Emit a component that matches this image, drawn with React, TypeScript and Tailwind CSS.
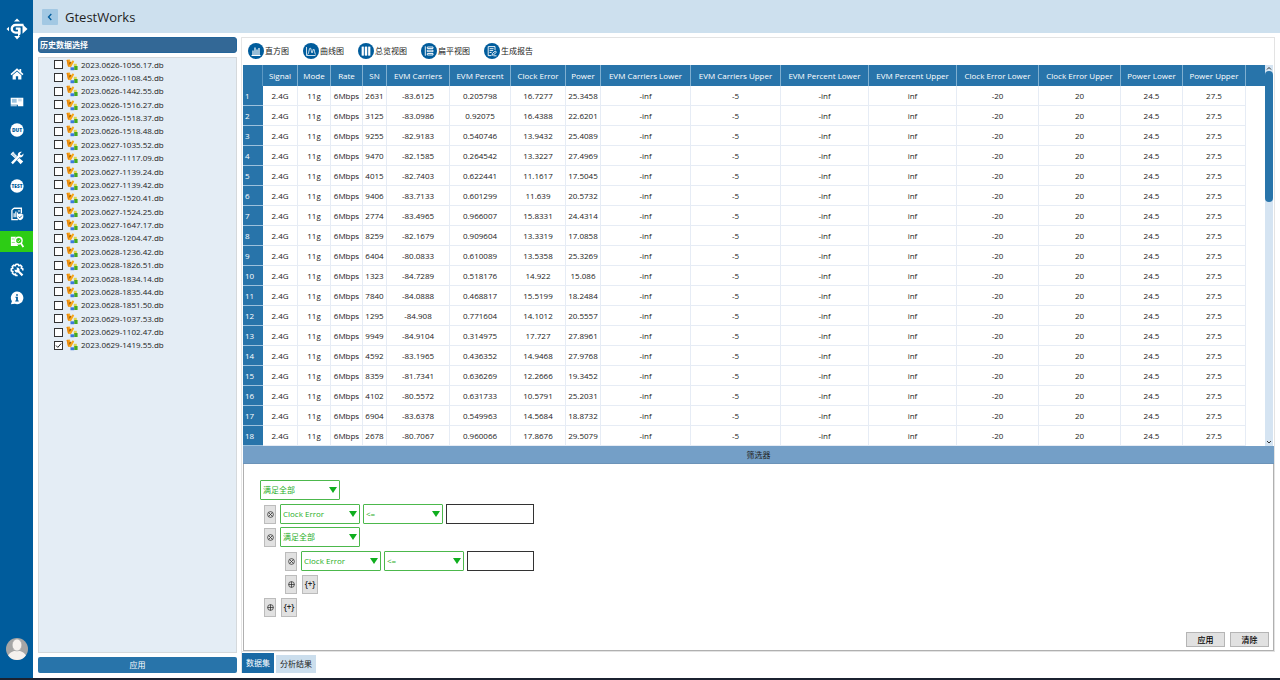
import React from "react";

const files = [
  "2023.0626-1056.17.db", "2023.0626-1108.45.db", "2023.0626-1442.55.db", "2023.0626-1516.27.db",
  "2023.0626-1518.37.db", "2023.0626-1518.48.db", "2023.0627-1035.52.db", "2023.0627-1117.09.db",
  "2023.0627-1139.24.db", "2023.0627-1139.42.db", "2023.0627-1520.41.db", "2023.0627-1524.25.db",
  "2023.0627-1647.17.db", "2023.0628-1204.47.db", "2023.0628-1236.42.db", "2023.0628-1826.51.db",
  "2023.0628-1834.14.db", "2023.0628-1835.44.db", "2023.0628-1851.50.db", "2023.0629-1037.53.db",
  "2023.0629-1102.47.db", "2023.0629-1419.55.db",
];

const columns = [
  { label: "Signal", width: "w-[35px]" },
  { label: "Mode", width: "w-[33px]" },
  { label: "Rate", width: "w-[32px]" },
  { label: "SN", width: "w-[24px]" },
  { label: "EVM Carriers", width: "w-[63px]" },
  { label: "EVM Percent", width: "w-[61px]" },
  { label: "Clock Error", width: "w-[55px]" },
  { label: "Power", width: "w-[35px]" },
  { label: "EVM Carriers Lower", width: "w-[90px]" },
  { label: "EVM Carriers Upper", width: "w-[90px]" },
  { label: "EVM Percent Lower", width: "w-[88px]" },
  { label: "EVM Percent Upper", width: "w-[88px]" },
  { label: "Clock Error Lower", width: "w-[82px]" },
  { label: "Clock Error Upper", width: "w-[82px]" },
  { label: "Power Lower", width: "w-[62px]" },
  { label: "Power Upper", width: "w-[63px]" },
];

const measurements = [
  ["2631", "-83.6125", "0.205798", "16.7277", "25.3458"],
  ["3125", "-83.0986", "0.92075", "16.4388", "22.6201"],
  ["9255", "-82.9183", "0.540746", "13.9432", "25.4089"],
  ["9470", "-82.1585", "0.264542", "13.3227", "27.4969"],
  ["4015", "-82.7403", "0.622441", "11.1617", "17.5045"],
  ["9406", "-83.7133", "0.601299", "11.639", "20.5732"],
  ["2774", "-83.4965", "0.966007", "15.8331", "24.4314"],
  ["8259", "-82.1679", "0.909604", "13.3319", "17.0858"],
  ["6404", "-80.0833", "0.610089", "13.5358", "25.3269"],
  ["1323", "-84.7289", "0.518176", "14.922", "15.086"],
  ["7840", "-84.0888", "0.468817", "15.5199", "18.2484"],
  ["1295", "-84.908", "0.771604", "14.1012", "20.5557"],
  ["9949", "-84.9104", "0.314975", "17.727", "27.8961"],
  ["4592", "-83.1965", "0.436352", "14.9468", "27.9768"],
  ["8359", "-81.7341", "0.636269", "12.2666", "19.3452"],
  ["4102", "-80.5572", "0.631733", "10.5791", "25.2031"],
  ["6904", "-83.6378", "0.549963", "14.5684", "18.8732"],
  ["2678", "-80.7067", "0.960066", "17.8676", "29.5079"],
];
const limits = ["-inf", "-5", "-inf", "inf", "-20", "20", "24.5", "27.5"];

function Logo() {
  return (
    <svg viewBox="0 0 22 22" className="h-[22px] w-[22px]" fill="#fff" aria-hidden="true">
      <path d="M11 0.5 14 3.4H8z" />
      <path d="M11 21.5 14.200 18H8.200z" />
      <path d="M0.5 11 3 8.800v4.400z" />
      <path d="M21.500 11 16.500 6.200v9.600z" />
      <path d="M17.500 7H9.600a3.800 3.800 0 0 0 0 7.600h3.600v-4H9.800" fill="none" stroke="#fff" strokeWidth="2.400" />
      <path d="M12 10h2.400v6.400L12 18.500z" />
    </svg>
  );
}

const navItems: { name: string; art: React.ReactNode }[] = [
  {
    name: "主页",
    art: (
      <g>
        <path d="M8 1.400 0.600 8l1.200 1.400L8 4l6.200 5.400L15.400 8l-2.600-2.300V2.200h-2v1.700z" />
        <path d="M8 5 3 9.400v5h3.700v-3.800h2.600v3.800H13v-5z" />
      </g>
    ),
  },
  {
    name: "设备",
    art: (
      <g>
        <path d="M.8 3h14.400v9.800H9V11H.8z" />
        <path d="M2.200 4.400h5.400v4.400H2.200z" fill="#9cc3df" />
        <path d="M9.400 4.800h4M9.400 6.600h4" stroke="#7fb0d2" strokeWidth=".7" />
        <path d="M.8 12.300h7" stroke="#fff" strokeWidth="1" />
      </g>
    ),
  },
  {
    name: "待测件",
    art: (
      <g>
        <circle cx="8" cy="8" r="7.600" />
        <text x="8" y="10" textAnchor="middle" fontSize="5.600" fontWeight="800" fill="#005c9c">DUT</text>
      </g>
    ),
  },
  {
    name: "工具",
    art: (
      <g>
        <path d="m3.200 15-2-2L9 5.200a3.700 3.700 0 0 1 4.600-4.300L11.400 3l.4 1.500 1.500.4 2-2.100a3.700 3.700 0 0 1-4.400 4.400z" />
        <path d="M3.600.6.6 3.600 5.700 8.200 8.200 5.600z" />
        <path d="m9 9.500 1.600-1.600 4.500 4.200-3 3.100-4.200-4.600z" />
        <path d="M2.600 3.200 5.800 6.400M4 1.900l3.100 3.200" stroke="#005c9c" strokeWidth=".6" />
      </g>
    ),
  },
  {
    name: "测试",
    art: (
      <g>
        <circle cx="8" cy="8" r="7.600" />
        <text x="8" y="10" textAnchor="middle" fontSize="5.400" fontWeight="800" fill="#005c9c">TEST</text>
      </g>
    ),
  },
  {
    name: "报告",
    art: (
      <g>
        <path d="M4.400 1.400H13v6M9 14.400H2.200V3.600l2.200-2.200" fill="none" stroke="#fff" strokeWidth="1.500" />
        <path d="M4 11.800V7h1.400v4.800zM6 11.800V5h1.400v6.800zM8 9V6.400h1.400V9zM9 4h2.600v1H9z" />
        <path d="M11.600 7.400 15.200 8.600v2.800c0 1.800-1.600 3-3.600 3.800C9.600 14.400 8 13.200 8 11.400V8.600z" />
        <path d="m9.800 11 1.400 1.400 2.400-2.600" fill="none" stroke="#005c9c" strokeWidth="1" />
      </g>
    ),
  },
  {
    name: "历史数据",
    art: (
      <g>
        <path d="M1 2h6.200a5 5 0 0 0-1.200 5.800A5 5 0 0 0 9 11v1.600H1z" />
        <path d="M2 4.500h3M2 8.500h3.600" stroke="#2dcc15" strokeWidth=".6" />
        <circle cx="10" cy="6.400" r="3.800" fill="none" stroke="#fff" strokeWidth="1.600" />
        <path d="m12.400 9.200 2.800 4.600" stroke="#fff" strokeWidth="2" />
        <path d="m8.500 6.500 1.200 1.200 1.900-2.400" fill="none" stroke="#fff" strokeWidth=".8" />
      </g>
    ),
  },
  {
    name: "设置",
    art: (
      <g>
        <path
          d="M8.800 14.300H6.700L6.300 12.500 4.800 13.400 2.700 11.500 3.400 9.800 1.500 9.200V6.600L3.300 6 2.500 4.200 4.400 2.400 6.100 3.200 6.800 1.400H9.300L10 3.200 11.800 2.400 13.600 4.200 12.800 6 14.600 6.600V8.600"
          fill="none"
          stroke="#fff"
          strokeWidth="1.800"
          strokeLinejoin="round"
        />
        <path d="M5.200 7.400 7 8l1-.9-.6-1.900a3 3 0 0 1 3.500 3.800l4.300 4.200-1.800 1.800-4.200-4.200a3 3 0 0 1-4-2.800z" />
      </g>
    ),
  },
  {
    name: "关于",
    art: (
      <g>
        <path d="M8 .5a7.300 7.300 0 1 1-2.400 14.200L1 15.200l1.200-3.400A7.300 7.300 0 0 1 8 .5z" />
        <path d="M7 3.600h2v1.800H7zM6.200 6.600H9v4.200h1v1.200H6v-1.200h1V7.800h-.8z" fill="#005c9c" />
      </g>
    ),
  },
];

const tools: { name: string; art: React.ReactNode }[] = [
  {
    name: "直方图",
    art: <path d="M3.500 12.500h9M5 12V7.500M7 12V4.500M9 12V6.500M11 12V5" strokeWidth="1.200" />,
  },
  {
    name: "曲线图",
    art: <path d="M3.500 4v8.500h9M4.500 11.500C6 11 6 5 7.200 5S8.200 10 9 10s.8-4 1.600-4 1 4.500 2 5.500" strokeWidth=".8" />,
  },
  {
    name: "总览视图",
    art: <path d="M3.800 3.800h2v8.600h-2zM7 3.800h2v8.600H7zM10.200 3.800h2v8.600h-2z" fill="#fff" strokeWidth=".3" />,
  },
  {
    name: "扁平视图",
    art: <path d="M4.300 3.300v9.400M6.300 4H12v1.500H6.300zM6.300 7.200H12v1.500H6.300zM6.300 10.500H12V12H6.300z" strokeWidth=".9" />,
  },
  {
    name: "生成报告",
    art: (
      <g strokeWidth=".9">
        <path d="M11 7V3.600H4.200v9h3.300M5.600 5.700h4M5.600 7.600h3.600M5.600 9.500h2" />
        <path d="m8.400 10.500 3-2.500 1 1.300-3 2.600-1.300.3zM9.500 12.800h3" />
      </g>
    ),
  },
];

function FileIcon() {
  return (
    <svg viewBox="0 0 12 12" className="h-3 w-3 shrink-0" aria-hidden="true">
      <path d="M.6 1 3.800.6 4.800 3.500 6.800 1.300 8.200 2.400 4.900 8.200 2 7.400z" fill="#f9a71c" />
      <path d="M.6 1 2.200.8l1 6.800L2 7.400z" fill="#e8860b" />
      <path d="m3.300 3.400 1.800-.3-1.400 3z" fill="#6b3d08" />
      <path d="M7.800 4.800h3v2.700h-3z" fill="#e0d44d" />
      <path d="M8.200 7h3.400v4H8.200z" fill="#45aa20" />
      <path d="M4.500 8.300h3.700v2.900H4.500z" fill="#3c78dc" />
    </svg>
  );
}

function FileRow({ name, checked }: { name: string; checked: boolean }) {
  return (
    <li>
      <label className="flex h-[13px] items-center">
        <span className="relative flex">
          <input
            type="checkbox"
            defaultChecked={checked}
            className="peer h-[9px] w-[9px] appearance-none border border-[#333] bg-white"
          />
          <svg
            viewBox="0 0 9 9"
            className="pointer-events-none absolute inset-0 hidden h-[9px] w-[9px] peer-checked:block"
            fill="none"
            stroke="#222"
            aria-hidden="true"
          >
            <path d="m2 4.500 1.800 1.900L7.200 2.500" />
          </svg>
        </span>
        <span className="ml-[3px] flex">
          <FileIcon />
        </span>
        <span className="ml-[3px] text-[#222]">{name}</span>
      </label>
    </li>
  );
}

function GreenSelect({ label, value }: { label: string; value: string }) {
  return (
    <span className="relative flex h-5 w-20">
      <select
        aria-label={label}
        className="h-full w-full appearance-none rounded-[1px] border border-[#4cb84c] bg-white pl-[2px] text-[#1fae1f]"
      >
        <option>{value}</option>
      </select>
      <svg
        viewBox="0 0 8 6"
        className="pointer-events-none absolute top-[7px] right-[3px] h-[6px] w-2"
        fill="#0fae1e"
        aria-hidden="true"
      >
        <path d="M0 0h8L4 6z" />
      </svg>
    </span>
  );
}

function SmallButton({ kind }: { kind: "remove" | "add" }) {
  return (
    <button
      aria-label={kind === "remove" ? "删除条件" : "添加条件"}
      className="flex h-[19px] w-3 items-center justify-center border border-[#bcbcbc] bg-[#e1e1e1]"
    >
      <svg viewBox="0 0 8 8" className="h-[7px] w-[7px]" fill="none" stroke="#222" strokeWidth=".8" aria-hidden="true">
        <circle cx="4" cy="4" r="3.300" />
        <path d={kind === "remove" ? "m2 2 4 4M6 2 2 6" : "M4 .7v6.600M.7 4h6.600"} />
      </svg>
    </button>
  );
}

function GroupButton() {
  return (
    <button aria-label="添加条件组" className="h-[19px] w-4 border border-[#bcbcbc] bg-[#e1e1e1] text-center leading-none font-semibold text-[#222]">
      {"{+}"}
    </button>
  );
}

function Condition() {
  return (
    <div className="flex items-center gap-[3px]">
      <span className="mr-px flex">
        <SmallButton kind="remove" />
      </span>
      <GreenSelect label="字段" value="Clock Error" />
      <GreenSelect label="运算符" value="<=" />
      <input aria-label="数值" className="h-5 min-w-0 flex-1 border border-[#333] bg-white px-1" />
    </div>
  );
}

function AddRow() {
  return (
    <div className="flex h-5 items-center gap-[5px]">
      <SmallButton kind="add" />
      <GroupButton />
    </div>
  );
}

export default function App() {
  return (
    <div className="flex h-screen flex-col bg-white font-['Open_Sans','Noto_Sans_CJK_SC',sans-serif] text-[8px] leading-[12px] text-[#222]">
      <div className="flex min-h-0 flex-1">
        <nav className="flex w-[33px] shrink-0 flex-col items-center bg-[#005c9c] pt-[18px] pb-[18px]">
          <Logo />
          <ul className="mt-[23px] flex w-full flex-col gap-[7px]">
            {navItems.map((item) => (
              <li key={item.name}>
                <button
                  aria-label={item.name}
                  className={
                    item.name === "历史数据"
                      ? "flex h-[21px] w-full items-center justify-center bg-[#2dcc15]"
                      : "flex h-[21px] w-full items-center justify-center"
                  }
                >
                  <svg viewBox="0 0 16 16" className="h-[14px] w-[14px]" fill="#fff" aria-hidden="true">
                    {item.art}
                  </svg>
                </button>
              </li>
            ))}
          </ul>
          <button aria-label="用户" className="mt-auto">
            <svg viewBox="0 0 22 22" className="h-[22px] w-[22px]" aria-hidden="true">
              <clipPath id="avatar">
                <circle cx="11" cy="11" r="11" />
              </clipPath>
              <g clipPath="url(#avatar)">
                <path d="M0 0h22v22H0z" fill="#a5a5a5" />
                <path d="M1 22c0-6 4-8 7-9h6c3 1 7 3 7 9z" fill="#f5f1ee" />
                <ellipse cx="11" cy="7" rx="4.800" ry="6" fill="#f5f1ee" stroke="#a5a5a5" strokeWidth=".6" />
              </g>
            </svg>
          </button>
        </nav>

        <div className="flex min-w-0 flex-1 flex-col">
          <header className="flex h-[33px] shrink-0 items-center gap-[7px] bg-[#cde0ee] pl-[9px]">
            <button aria-label="返回" className="flex h-4 w-4 items-center justify-center rounded-[1px] bg-[#a2c8e3]">
              <svg viewBox="0 0 8 8" className="h-2 w-2" fill="none" stroke="#005c9c" strokeWidth="1.300" aria-hidden="true">
                <path d="M5.300 1 2.500 4l2.800 3" />
              </svg>
            </button>
            <h1 className="text-[13px] leading-4 text-[#222]">GtestWorks</h1>
          </header>

          <div className="flex min-h-0 flex-1 gap-1 pt-1 pr-[5px] pb-[5px] pl-[5px]">
            <aside className="flex w-[199px] shrink-0 flex-col">
              <h2 className="h-4 shrink-0 rounded-[3px] border border-[#24659a] bg-[#336896] pl-px leading-[14px] font-bold text-white">
                历史数据选择
              </h2>
              <ul className="mt-1 flex min-h-0 flex-1 flex-col overflow-hidden border border-[#d5d9dc] bg-[#e4edf5] pl-[15px]">
                <li className="h-[294px] shrink-0">
                  <ul className="flex h-full flex-col justify-between">
                    {files.map((f, i) => (
                      <FileRow key={f} name={f} checked={i === files.length - 1} />
                    ))}
                  </ul>
                </li>
              </ul>
              <button className="mt-1 h-4 shrink-0 rounded-[2px] bg-[#2874aa] text-center leading-4 text-white">应用</button>
            </aside>

            <main className="flex min-w-0 flex-1 flex-col border-l border-[#e6e6e6]">
              <div className="flex min-h-0 flex-1 flex-col border-t border-r border-b border-[#e3e3e3] pl-px">
                <div className="flex h-[27px] shrink-0 items-center gap-[14px] pb-[2px] pl-[5px]">
                  {tools.map((t) => (
                    <button key={t.name} className="flex items-center gap-px">
                      <svg viewBox="0 0 16 16" className="h-4 w-4" fill="none" stroke="#fff" aria-hidden="true">
                        <circle cx="8" cy="8" r="8" fill="#005c9c" stroke="none" />
                        {t.art}
                      </svg>
                      <span>{t.name}</span>
                    </button>
                  ))}
                </div>

                <div className="flex min-h-0 flex-1">
                  <div className="min-h-0 min-w-0 flex-1 overflow-hidden">
                    <table className="w-full table-fixed border-separate border-spacing-0 text-center">
                      <thead>
                        <tr className="h-[21px] bg-[#2874aa] text-white">
                          <th aria-label="行号" className="w-5 border-r border-[#5c98c3] p-0" />
                          {columns.map((c) => (
                            <th key={c.label} className={`${c.width} border-r border-[#7fafd0] p-0 font-normal whitespace-nowrap`}>
                              {c.label}
                            </th>
                          ))}
                          <th aria-label="空列" className="p-0" />
                        </tr>
                      </thead>
                      <tbody>
                        {measurements.map((m, i) => (
                          <tr key={m[0]} className="h-5">
                            <th className="border-b border-[#9cc0dc] bg-[#2874aa] p-0 pl-[2px] text-left font-normal text-white">
                              {i + 1}
                            </th>
                            {["2.4G", "11g", "6Mbps", ...m, ...limits].map((v, j) => (
                              <td key={j} className="border-r border-b border-[#e6ecf5] p-0">
                                {v}
                              </td>
                            ))}
                            <td />
                          </tr>
                        ))}
                      </tbody>
                    </table>
                  </div>
                  <div className="mr-px flex w-2 shrink-0 flex-col items-center bg-[#d5e4f2]" aria-hidden="true">
                    <svg viewBox="0 0 8 6" className="h-[6px] w-2 shrink-0" fill="none" stroke="#333">
                      <path d="m2 4.500 2-2 2 2" />
                    </svg>
                    <div className="h-[131px] w-2 rounded-full bg-[#2874aa]" />
                    <svg viewBox="0 0 8 8" className="mt-auto h-2 w-2 shrink-0" fill="none" stroke="#333">
                      <path d="m2 3 2 2 2-2" />
                    </svg>
                  </div>
                </div>

                <section className="flex h-[205px] shrink-0 flex-col">
                  <h2 className="h-[18px] shrink-0 border-b border-[#6c93b8] bg-[#749fc7] text-center leading-[18px] font-normal text-[#222]">
                    筛选器
                  </h2>
                  <div className="flex flex-1 flex-col border border-t-0 border-[#b0b0b0] pt-4 pr-1 pb-[3px] pl-4">
                    <div className="flex w-[274px] flex-col gap-1">
                      <GreenSelect label="匹配方式" value="满足全部" />
                      <div className="flex flex-col gap-[3px] pl-1">
                        <Condition />
                        <div className="flex flex-col gap-1">
                          <div className="flex items-center gap-1">
                            <SmallButton kind="remove" />
                            <GreenSelect label="子组匹配方式" value="满足全部" />
                          </div>
                          <div className="flex flex-col gap-[3px] pl-[21px]">
                            <Condition />
                            <AddRow />
                          </div>
                        </div>
                        <AddRow />
                      </div>
                    </div>
                    <div className="mt-auto flex justify-end gap-[5px]">
                      <button className="h-[15px] w-[39px] border border-[#b5b5b5] bg-[#e1e1e1] leading-none font-medium text-black">应用</button>
                      <button className="h-[15px] w-[39px] border border-[#b5b5b5] bg-[#e1e1e1] leading-none font-medium text-black">清除</button>
                    </div>
                  </div>
                </section>
              </div>

              <div className="flex h-[21px] shrink-0 items-end gap-[2px]" role="tablist">
                <button role="tab" aria-selected="true" className="h-5 w-8 bg-[#1a6aa5] text-center text-white">数据集</button>
                <button role="tab" aria-selected="false" className="h-[18px] w-10 bg-[#cbdeed] text-center">分析结果</button>
              </div>
            </main>
          </div>
        </div>
      </div>
      <div className="h-[2px] shrink-0 bg-[#1b2230]" />
    </div>
  );
}
